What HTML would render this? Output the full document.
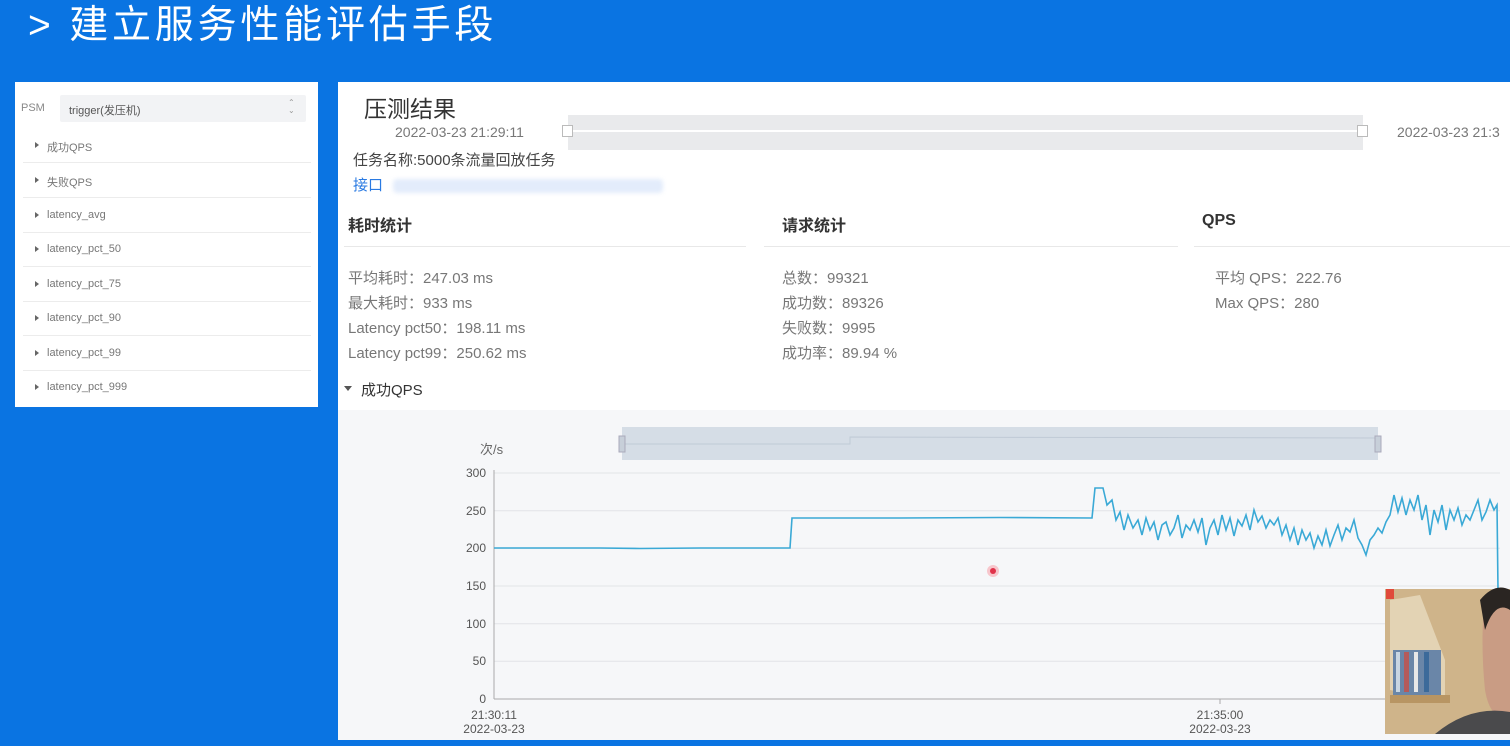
<!DOCTYPE html>
<html><head><meta charset="utf-8">
<style>
*{margin:0;padding:0;box-sizing:border-box}
body{width:1510px;height:746px;overflow:hidden;background:#0a74e2;font-family:"Liberation Sans","Noto Sans CJK SC",sans-serif;position:relative}
.a{position:absolute;white-space:nowrap}
.title{left:28px;top:3px;font-size:39px;color:#fff;line-height:46px;letter-spacing:3.8px}
.lp{left:15px;top:82px;width:303px;height:325px;background:#fff}
.mp{left:338px;top:82px;width:1172px;height:658px;background:#fff}
.li{position:absolute;left:8px;width:288px;height:35px;border-bottom:1px solid #ececec;font-size:11px;color:#777}
.li span{position:absolute;left:24px;top:11px}
.li i{position:absolute;left:12px;top:14px;width:0;height:0;border-left:4px solid #666;border-top:3px solid transparent;border-bottom:3px solid transparent}
.g{color:#777;font-size:15px}
.h{color:#333;font-size:16px;font-weight:bold}
</style></head><body>
<div class="a title">&gt; 建立服务性能评估手段</div>

<div class="a lp">
  <div class="a" style="left:6px;top:20px;font-size:11px;color:#888">PSM</div>
  <div class="a" style="left:45px;top:13px;width:246px;height:27px;background:#f2f3f5;border-radius:2px"></div>
  <div class="a" style="left:54px;top:20px;font-size:11px;color:#555">trigger(发压机)</div>
  <div class="a" style="left:273px;top:17px;font-size:8px;color:#999;line-height:8px">⌃<br>⌄</div>
  <div class="li" style="top:46px"><i></i><span>成功QPS</span></div>
  <div class="li" style="top:81px"><i></i><span>失败QPS</span></div>
  <div class="li" style="top:116px"><i></i><span>latency_avg</span></div>
  <div class="li" style="top:150px"><i></i><span>latency_pct_50</span></div>
  <div class="li" style="top:185px"><i></i><span>latency_pct_75</span></div>
  <div class="li" style="top:219px"><i></i><span>latency_pct_90</span></div>
  <div class="li" style="top:254px"><i></i><span>latency_pct_99</span></div>
  <div class="li" style="top:288px;border:none"><i></i><span>latency_pct_999</span></div>
</div>

<div class="a mp">
  <div class="a" style="left:26px;top:8px;font-size:23px;color:#333">压测结果</div>
  <div class="a g" style="left:57px;top:42px;font-size:14px">2022-03-23 21:29:11</div>
  <div class="a" style="left:230px;top:33px;width:795px;height:35px;background:#e9eaec"></div>
  <div class="a" style="left:235px;top:48px;width:790px;height:2px;background:#fff"></div>
  <div class="a" style="left:224px;top:43px;width:11px;height:12px;border:1px solid #bbb;background:#fff"></div>
  <div class="a" style="left:1019px;top:43px;width:11px;height:12px;border:1px solid #bbb;background:#fff"></div>
  <div class="a g" style="left:1059px;top:42px;font-size:14px">2022-03-23 21:3</div>
  <div class="a" style="left:15px;top:67px;font-size:15px;color:#444">任务名称:5000条流量回放任务</div>
  <div class="a" style="left:15px;top:92px;font-size:15px;color:#2a7ae2">接口</div>
  <div class="a" style="left:55px;top:97px;width:270px;height:14px;background:#e3ecfb;border-radius:4px;filter:blur(2px)"></div>

  <div class="a h" style="left:10px;top:130px">耗时统计</div>
  <div class="a h" style="left:444px;top:130px">请求统计</div>
  <div class="a h" style="left:864px;top:130px">QPS</div>
  <div class="a" style="left:6px;top:164px;width:402px;height:1px;background:#e8e8e8"></div>
  <div class="a" style="left:426px;top:164px;width:414px;height:1px;background:#e8e8e8"></div>
  <div class="a" style="left:856px;top:164px;width:316px;height:1px;background:#e8e8e8"></div>

  <div class="a g" style="left:10px;top:184px;line-height:25px">平均耗时：247.03 ms<br>最大耗时：933 ms<br>Latency pct50：198.11 ms<br>Latency pct99：250.62 ms</div>
  <div class="a g" style="left:444px;top:184px;line-height:25px">总数：99321<br>成功数：89326<br>失败数：9995<br>成功率：89.94 %</div>
  <div class="a g" style="left:877px;top:184px;line-height:25px">平均 QPS：222.76<br>Max QPS：280</div>

  <div class="a" style="left:6px;top:304px;width:0;height:0;border-top:5px solid #555;border-left:4px solid transparent;border-right:4px solid transparent"></div>
  <div class="a" style="left:23px;top:297px;font-size:15px;color:#333">成功QPS</div>
  <div class="a" style="left:0;top:328px;width:1172px;height:330px;background:#f6f7f9"></div>
</div>

<svg class="a" style="left:0;top:0" width="1510" height="746">
  <rect x="622" y="427" width="756" height="33" fill="#d5dde6"/>
  <polyline points="622,444 850,444 850,437 1378,438" fill="none" stroke="#c0cad6" stroke-width="1"/>
  <rect x="619" y="436" width="6" height="16" fill="#c7cfd9" stroke="#aab"/>
  <rect x="1375" y="436" width="6" height="16" fill="#c7cfd9" stroke="#aab"/>
  <text x="480" y="454" font-size="13" fill="#666" font-family="Liberation Sans,Noto Sans CJK SC,sans-serif">次/s</text>
  <g stroke="#e2e4e8" stroke-width="1">
    <line x1="494" y1="473" x2="1500" y2="473"/><line x1="494" y1="510.7" x2="1500" y2="510.7"/>
    <line x1="494" y1="548.3" x2="1500" y2="548.3"/><line x1="494" y1="586" x2="1500" y2="586"/>
    <line x1="494" y1="623.7" x2="1500" y2="623.7"/><line x1="494" y1="661.3" x2="1500" y2="661.3"/>
  </g>
  <line x1="494" y1="699" x2="1500" y2="699" stroke="#aaa"/>
  <line x1="494" y1="470" x2="494" y2="699" stroke="#aaa"/>
  <line x1="1220" y1="699" x2="1220" y2="704" stroke="#aaa"/>
  <g font-size="12" fill="#555" text-anchor="end" font-family="Liberation Sans,sans-serif">
    <text x="486" y="477">300</text><text x="486" y="515">250</text><text x="486" y="552">200</text>
    <text x="486" y="590">150</text><text x="486" y="628">100</text><text x="486" y="665">50</text><text x="486" y="703">0</text>
  </g>
  <g font-size="12" fill="#555" text-anchor="middle" font-family="Liberation Sans,sans-serif">
    <text x="494" y="719">21:30:11</text><text x="494" y="733">2022-03-23</text>
    <text x="1220" y="719">21:35:00</text><text x="1220" y="733">2022-03-23</text>
  </g>
  <polyline fill="none" stroke="#3aa9d6" stroke-width="1.6" points="494,548 600,548 640,548.5 700,548 790,548 792,518 900,518 1000,517.5 1092,518 1095,488 1103,488 1107,505 1112,500 1116,520 1120,512 1124,530 1128,515 1133,528 1138,520 1142,535 1146,518 1150,530 1154,522 1158,540 1162,525 1166,522 1170,535 1174,528 1178,515 1182,538 1186,525 1190,530 1194,520 1198,532 1202,518 1206,545 1210,528 1214,520 1218,535 1222,515 1226,530 1230,518 1234,536 1238,520 1242,526 1246,515 1250,530 1254,510 1258,522 1262,516 1266,528 1270,520 1274,525 1278,518 1282,535 1286,525 1290,540 1294,528 1298,545 1302,530 1306,540 1310,533 1314,548 1318,536 1322,545 1326,530 1330,546 1334,535 1338,525 1342,540 1346,528 1350,532 1354,520 1358,538 1362,545 1366,555 1370,540 1374,535 1378,528 1382,533 1386,522 1390,515 1394,495 1398,512 1402,498 1406,515 1410,500 1414,510 1418,495 1422,520 1426,505 1430,535 1434,510 1438,522 1442,505 1446,530 1450,510 1454,520 1458,508 1462,525 1466,515 1470,520 1474,510 1478,500 1482,520 1486,512 1490,500 1494,510 1497,505 1498,590"/>
  <circle cx="993" cy="571" r="6" fill="#f7c6cc"/><circle cx="993" cy="571" r="3" fill="#e0324a"/>
  <rect x="0" y="740" width="1510" height="6" fill="#0a74e2"/>
  <rect x="1385" y="589" width="125" height="145" fill="#cfb48a"/>
  <path d="M1390 600 L1420 595 L1445 660 L1445 700 L1390 690 Z" fill="#e3d3b4"/>
  <rect x="1393" y="650" width="48" height="45" fill="#6a86a8"/>
  <rect x="1396" y="652" width="4" height="40" fill="#c9d6e2"/>
  <rect x="1404" y="652" width="5" height="40" fill="#b55a5a"/>
  <rect x="1414" y="652" width="4" height="40" fill="#e8e8e8"/>
  <rect x="1424" y="652" width="5" height="40" fill="#3c6a9a"/>
  <rect x="1390" y="695" width="60" height="8" fill="#b89563"/>
  <rect x="1386" y="589" width="8" height="10" fill="#e04a3a"/>
  <path d="M1485 595 Q1510 585 1510 600 L1510 720 Q1490 720 1485 690 Q1480 640 1485 595 Z" fill="#c99c84"/>
  <path d="M1480 600 Q1495 582 1510 590 L1510 610 Q1495 600 1485 630 Z" fill="#2a2522"/>
  <path d="M1435 734 Q1470 705 1510 712 L1510 734 Z" fill="#4a4a4c"/>
</svg>
</body></html>
